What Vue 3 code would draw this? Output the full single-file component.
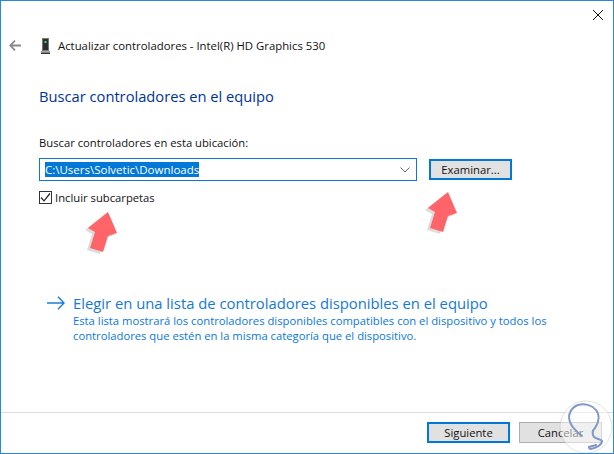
<template>
  <div class="window">
    <button class="close" aria-label="Cerrar">
      <svg width="10" height="10" viewBox="0 0 10 10">
        <path d="M0 0L10 10M10 0L0 10" stroke="#111" stroke-width="1" fill="none" />
      </svg>
    </button>

    <div class="content">
      <header class="title-row">
        <svg class="back" width="12" height="11" viewBox="0 0 12 11">
          <path d="M12 5.5H1.5M6 .7L1.2 5.5 6 10.3" stroke="#8a8a8a" stroke-width="1.8" fill="none" />
        </svg>
        <svg class="device" width="11" height="16" viewBox="0 0 11 16">
          <path d="M2 0h7v13H2z" fill="#777" />
          <path d="M3 1h5v11H3z" fill="#2e2e2e" />
          <path d="M4.5 3h2v2h-2z" fill="#35e06a" />
          <path d="M1 13h9v1.5H1z" fill="#a8a8a8" />
          <path d="M1 14.5h9V16H1z" fill="#333" />
        </svg>
        <span>Actualizar controladores - Intel(R) HD Graphics 530</span>
      </header>

      <h1 class="heading">Buscar controladores en el equipo</h1>

      <label class="path-label">Buscar controladores en esta ubicación:</label>
      <div class="path-row">
        <div class="combo">
          <span class="selected">C:\Users\Solvetic\Downloads</span>
          <svg width="10" height="6" viewBox="0 0 10 6">
            <path d="M.5 .5L5 5 9.5 .5" stroke="#666" stroke-width="1" fill="none" />
          </svg>
        </div>
        <button class="btn btn-default browse">Examinar...</button>
      </div>

      <div class="check-row">
        <span class="checkbox">
          <svg width="11" height="11" viewBox="0 0 11 11">
            <path d="M1 5.5L4 8.8 10 1.5" stroke="#222" stroke-width="1.2" fill="none" />
          </svg>
        </span>
        <span>Incluir subcarpetas</span>
      </div>

      <div class="link-block">
        <svg class="link-arrow" width="18" height="14" viewBox="0 0 18 14">
          <path d="M0 7H17M11 .8L17 7 11 13.2" stroke="#1a7fdc" stroke-width="1.4" fill="none" />
        </svg>
        <div>
          <div class="link-title">Elegir en una lista de controladores disponibles en el equipo</div>
          <p class="link-desc">
            Esta lista mostrará los controladores disponibles compatibles con el dispositivo y todos los
            controladores que estén en la misma categoría que el dispositivo.
          </p>
        </div>
      </div>
    </div>

    <footer class="footer">
      <button class="btn btn-default">Siguiente</button>
      <button class="btn">Cancelar</button>
    </footer>

    <!-- Red arrows added on top of the screenshot -->
    <svg class="red-arrow arrow-left" width="50" height="55" viewBox="0 0 50 55">
      <path d="M28 7L37 28 28 31 23 47 10 43 15 27 8 23z" fill="#9a9a9a" opacity=".35" transform="translate(-3 2)" />
      <path d="M28 7L37 28 28 31 23 47 10 43 15 27 8 23z" fill="#ff6469" />
    </svg>
    <svg class="red-arrow arrow-right" width="50" height="55" viewBox="0 0 50 55">
      <path d="M28 7L37 28 28 31 23 47 10 43 15 27 8 23z" fill="#9a9a9a" opacity=".35" transform="translate(-3 2)" />
      <path d="M28 7L37 28 28 31 23 47 10 43 15 27 8 23z" fill="#ff6469" />
    </svg>

    <!-- Watermark -->
    <svg class="watermark" width="60" height="60" viewBox="0 0 60 60">
      <circle cx="32" cy="33" r="26" fill="#fff" opacity=".5" stroke="#c8c8c8" stroke-width="1" />
      <path d="M28 42C23 38 18 34 16 28 13 20 18 13 24 11 30 9 38 11 42 16 46 21 45 28 41 34 38 37 38 40 40 43 42 45 47 45 48 47 48 51 42 54 37 55 36 55 35 54 35 53 38 52 40 52 42 51"
        stroke="#7f97c9" stroke-width="2" stroke-linecap="round" fill="none" />
    </svg>
  </div>
</template>

<script setup>
</script>

<style>
html,
body {
  margin: 0;
  background: #fff;
}
</style>

<style scoped>
.window {
  position: relative;
  box-sizing: border-box;
  width: 614px;
  height: 454px;
  display: flex;
  flex-direction: column;
  background: #fff;
  border: 1px solid #2b87d8;
  font-family: "Open Sans", "Liberation Sans", sans-serif;
  font-size: 11.25px;
  color: #111;
  overflow: hidden;
}

.close {
  position: absolute;
  top: 9px;
  right: 10px;
  padding: 0;
  border: 0;
  background: none;
  line-height: 0;
}

.content {
  flex: 1;
  padding: 36px 38px 0 38px;
}

.title-row {
  display: flex;
  align-items: center;
  height: 17px;
  margin-left: -30px;
  font-size: 11.35px;
}

.back {
  margin-right: 19px;
}

.device {
  margin-right: 7px;
}

.heading {
  margin: 32px 0 0;
  font-size: 14.7px;
  font-weight: 400;
  line-height: 20px;
  color: #003399;
}

.path-label {
  display: block;
  margin-top: 29px;
  line-height: 16px;
}

.path-row {
  display: flex;
  align-items: flex-start;
  margin-top: 7px;
}

.combo {
  box-sizing: border-box;
  width: 378px;
  height: 23px;
  display: flex;
  align-items: center;
  justify-content: space-between;
  padding: 0 6px 0 5px;
  border: 1px solid #0a78d7;
}

.selected {
  background: #0078d7;
  color: #fff;
  font-size: 11.5px;
  line-height: 15px;
}

.browse {
  width: 86px;
  height: 24px;
  margin-left: 12px;
  margin-top: 1px;
}

.check-row {
  display: flex;
  align-items: center;
  gap: 3px;
  margin-top: 8px;
  height: 16px;
}

.checkbox {
  box-sizing: border-box;
  width: 13px;
  height: 13px;
  display: flex;
  align-items: center;
  justify-content: center;
  border: 1px solid #333;
}

.link-block {
  display: flex;
  align-items: flex-start;
  margin-top: 88px;
  gap: 8px;
}

.link-arrow {
  margin: 3px 0 0 8px;
  flex: none;
}

.link-title {
  font-size: 14.8px;
  line-height: 20px;
  color: #1479d6;
}

.link-desc {
  margin: 0;
  width: 490px;
  line-height: 15px;
  color: #0a78e0;
}

.footer {
  flex: none;
  height: 41px;
  display: flex;
  justify-content: flex-end;
  align-items: flex-start;
  gap: 9px;
  box-sizing: border-box;
  padding: 9px 11px 0 0;
  border-top: 1px solid #dcdcdc;
}

.btn {
  box-sizing: border-box;
  width: 83px;
  height: 21px;
  padding: 0;
  font: inherit;
  color: #111;
  background: #e1e1e1;
  border: 1px solid #adadad;
}

.btn-default {
  border: 2px solid #0078d7;
}

.red-arrow {
  position: absolute;
}

.arrow-left {
  left: 79px;
  top: 204px;
}

.arrow-right {
  left: 419px;
  top: 184px;
}

.watermark {
  position: absolute;
  right: -1px;
  bottom: -1px;
}
</style>
